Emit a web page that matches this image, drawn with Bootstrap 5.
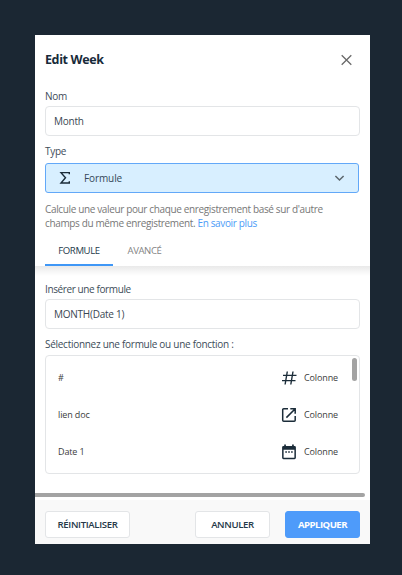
<!DOCTYPE html>
<html lang="fr">
<head>
<meta charset="utf-8">
<meta name="viewport" content="width=device-width, initial-scale=1">
<title>Edit Week</title>
<link rel="stylesheet" href="https://cdn.jsdelivr.net/npm/bootstrap@5.3.0/dist/css/bootstrap.min.css">
<style>
body{background:#1b2733;font-family:"Open Sans","Noto Sans",sans-serif;font-size:10px;color:#3d4c59;line-height:14px;overflow:hidden}
.panel{width:335px;height:509px;margin:35px 0 0 35px;background:#fff;overflow:hidden}
.panel-head{height:50px;padding:0 17px 0 10px}
.title{font-size:12.5px;font-weight:700;color:#172b3a;line-height:16px;letter-spacing:-.38px}
.fields,.formula{padding:0 10px;letter-spacing:-.28px}
.fields{padding-top:4px}
.formula{padding-top:6px}
.field-label{height:14px;line-height:14px;white-space:nowrap}
.form-control.box{height:30px;margin-top:3px;border-color:#e3e5e7;border-radius:4px;padding:0 8px;font-size:10px;line-height:28px;color:#3a4752;background:#fff;letter-spacing:-.25px}
.type-label,.sel-label{margin-top:8px}
.type-select{width:314px;height:30px;margin-top:5px;background:#d8efff;border:1px solid #62a8f8;border-radius:3px;padding:0 13px;color:#344858;letter-spacing:-.1px}
.kind{margin-left:13px}
.help{margin-top:9px;height:28px;color:#777;white-space:nowrap;letter-spacing:-.36px}
.help a{color:#4b9bf7}
.tabs{height:36px;padding-left:10px}
.tabs .nav-link{width:68px;padding:0;text-align:center;color:#858585;font-size:9.6px;letter-spacing:-.4px;line-height:26px;height:28px;border-bottom:2px solid transparent}
.tabs .nav-link.active{color:#263b4c;border-color:#3f97f6}
.tabs .nav-link + .nav-link{width:63px}
.shade{height:10px;background:linear-gradient(#e9e9e9,#f7f7f7 60%,#fff)}
.ins{letter-spacing:-.39px}
.choices{height:119px;margin-top:4px;border:1px solid #e3e5e7;border-radius:4px;position:relative;padding:3px 21px 0 12px;font-size:9px;letter-spacing:-.13px;color:#3c3c3c}
.choice{height:37.4px}
.choice svg{width:16px;height:16px;margin-right:7px}
.vbar{position:absolute;right:2px;top:2px;width:5px;height:23px;border-radius:3px;background:#a3a3a3}
.hbar{width:330px;height:4px;margin-bottom:3px;background:#a3a3a3;border-radius:0 2px 2px 0}
.panel-foot{height:44px;background:#f9f9f9;padding:11px 10px 6px}
.panel-foot .btn{width:75px;height:27px;padding:0;font-size:9.6px;font-weight:600;letter-spacing:-.35px;line-height:25px;border-radius:3px;color:#253847;background:#fff;border:1px solid #e3e5e7;white-space:nowrap}
.panel-foot .btn.reset{width:85px}
.panel-foot .btn.go{margin-left:15px;background:#4e9bfa;border-color:#4e9bfa;color:#fff;font-weight:700;letter-spacing:-.55px}
</style>
</head>
<body>
<main class="panel d-flex flex-column">
<header class="panel-head d-flex align-items-center justify-content-between">
<h1 class="title m-0">Edit Week</h1>
<svg width="13" height="13" viewBox="0 0 13 13" fill="none" stroke="#696969" stroke-width="1.3"><path d="M1.7 1.2l9.6 9.6M11.3 1.2L1.7 10.8"/></svg>
</header>
<section class="fields">
<div class="field-label">Nom</div>
<div class="form-control box">Month</div>
<div class="field-label type-label">Type</div>
<div class="type-select d-flex align-items-center">
<svg width="12" height="14" viewBox="0 0 12 14" fill="none" stroke="#1b2c39" stroke-width="1.4"><path d="M10.3 3.3V1.6H2l4.5 5.2L2 12h8.3v-1.7"/></svg>
<span class="kind">Formule</span>
<svg class="ms-auto" width="11" height="8" viewBox="0 0 11 8" fill="none" stroke="#5c666d" stroke-width="1.5"><path d="M1.4 2l4.1 4 4.1-4"/></svg>
</div>
<div class="help">Calcule une valeur pour chaque enregistrement basé sur d'autre<br>champs du même enregistrement. <a class="text-decoration-none" href="#">En savoir plus</a></div>
</section>
<nav class="nav tabs align-items-end"><a class="nav-link active" href="#">FORMULE</a><a class="nav-link" href="#">AVANCÉ</a></nav>
<div class="shade"></div>
<section class="formula">
<div class="field-label ins">Insérer une formule</div>
<div class="form-control box">MONTH(Date 1)</div>
<div class="field-label sel-label">Sélectionnez une formule ou une fonction :</div>
<div class="choices">
<div class="choice d-flex align-items-center"><span class="me-auto">#</span><svg viewBox="0 0 16 16" fill="none" stroke="#1b2c39" stroke-width="1.4"><path d="M6.3 1.5l-2.2 13M12 1.5l-2.2 13M2 5.4h13.5M1 10.6h13.5"/></svg><span>Colonne</span></div>
<div class="choice d-flex align-items-center"><span class="me-auto">lien doc</span><svg viewBox="0 0 16 16" fill="none" stroke="#1b2c39" stroke-width="1.5"><path d="M7 1.8H2.7a1 1 0 0 0-1 1v10.5a1 1 0 0 0 1 1h10.5a1 1 0 0 0 1-1V9M9.3 1.8h4.9v4.9M14 2L5.4 10.6"/></svg><span>Colonne</span></div>
<div class="choice d-flex align-items-center"><span class="me-auto">Date 1</span><svg viewBox="0 0 16 16"><path fill="#1b2c39" fill-rule="evenodd" d="M3.2.5h1.7v1.4h6.2V.5h1.7v1.4h.7a1.4 1.4 0 0 1 1.4 1.4v10.5a1.4 1.4 0 0 1-1.4 1.4h-11a1.4 1.4 0 0 1-1.4-1.4V3.3a1.4 1.4 0 0 1 1.4-1.4h.7zM2.6 5.8v8h10.8v-8z"/><path fill="#1b2c39" d="M4.3 7.3h1.6v1.5H4.3zM7.2 7.3h1.6v1.5H7.2zM10.1 7.3h1.6v1.5h-1.6z"/></svg><span>Colonne</span></div>
<div class="vbar"></div>
</div>
</section>
<div class="hbar mt-auto"></div>
<footer class="panel-foot d-flex"><button class="btn reset" type="button">RÉINITIALISER</button><button class="btn cancel ms-auto" type="button">ANNULER</button><button class="btn go" type="button">APPLIQUER</button></footer>
</main>
<script src="https://cdn.jsdelivr.net/npm/bootstrap@5.3.0/dist/js/bootstrap.bundle.min.js"></script>
</body>
</html>
